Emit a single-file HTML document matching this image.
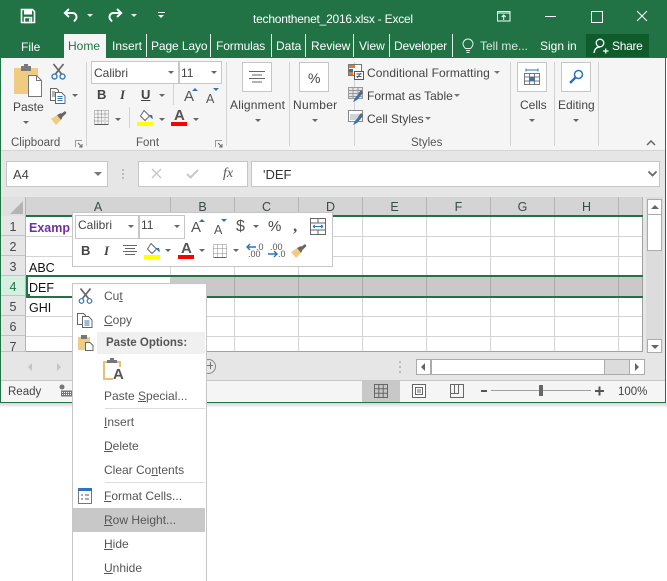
<!DOCTYPE html>
<html><head><meta charset="utf-8">
<style>
html,body{margin:0;padding:0;background:#fff;width:667px;height:581px;overflow:hidden}
body{position:relative;font-family:"Liberation Sans",sans-serif;font-size:12px;color:#444}
div,span.a,svg{position:absolute}
.t{position:absolute;white-space:nowrap;line-height:16px;font-size:12px;color:#444}
.w{color:#fff}
.b{background:#fff;border:1px solid #c6c6c6;box-sizing:border-box}
.v{background:#d4d4d4;width:1px}
.h{background:#d4d4d4;height:1px}
.sep{background:#d2d2d2;width:1px;top:62px;height:84px}
.tsep{background:#e6f0ea;width:1px;top:34px;height:23px}
.ar{position:absolute;width:0;height:0;border-left:3px solid transparent;border-right:3px solid transparent;border-top:3px solid #666}
.col{position:absolute;top:197px;height:18px;line-height:21px;text-align:center;font-size:12.5px;color:#3a4a44;background:#d4d4d4;border-right:1px solid #b4b4b4;box-sizing:border-box}
.row{position:absolute;left:1px;width:25px;height:20px;line-height:23px;text-align:center;font-size:12.5px;color:#444;background:#e6e6e6;border-bottom:1px solid #c4c4c4;box-sizing:border-box;border-right:1px solid #b4b4b4}
.c{position:absolute;left:29px;font-size:12.5px;color:#111;line-height:16px;white-space:nowrap}
u{text-decoration:underline}
.m{position:absolute;left:104px;font-size:12px;color:#555;line-height:16px;white-space:nowrap}
</style></head><body>

<!-- window -->
<div style="left:0;top:403px;width:667px;height:5px;background:linear-gradient(#d4d4d4,#fff)"></div>
<div style="left:0;top:0;width:666px;height:403px;background:#e6e6e6;border:solid #217346;border-width:0 1px 1px 1px;box-sizing:border-box"></div>

<!-- title -->
<div style="left:0;top:0;width:667px;height:58px;background:#217346"></div>
<svg style="left:20px;top:8px" width="16" height="16" viewBox="0 0 16 16"><path d="M1.5 1.5h11l2 2v11h-13z" fill="none" stroke="#fff" stroke-width="1.6"/><rect x="4" y="1.5" width="8" height="5" fill="#fff"/><rect x="4.5" y="9.5" width="7" height="5" fill="none" stroke="#fff" stroke-width="1.4"/><rect x="9" y="10.5" width="1.5" height="3" fill="#fff"/></svg>
<svg style="left:63px;top:8px" width="16" height="15" viewBox="0 0 16 15"><path d="M6 1 1.800 5 6 9M2 5h7.500a4 4 0 0 1 3.500 6L11 13.500" fill="none" stroke="#fff" stroke-width="1.900"/></svg>
<div class="ar" style="left:87px;top:14px;border-top-color:#e6f0ea"></div>
<svg style="left:107px;top:8px" width="16" height="15" viewBox="0 0 16 15"><path d="M10 1l4.200 4L10 9M14 5H6.500a4 4 0 0 0-3.500 6L5 13.500" fill="none" stroke="#fff" stroke-width="1.900"/></svg>
<div class="ar" style="left:131px;top:14px;border-top-color:#e6f0ea"></div>
<div style="left:158px;top:12px;width:7px;height:1px;background:#fff"></div>
<div class="ar" style="left:158px;top:15px;border-top-color:#fff"></div>
<div class="t w" style="left:253px;top:11px;letter-spacing:-.23px">techonthenet_2016.xlsx - Excel</div>
<svg style="left:497px;top:10px" width="16" height="14" viewBox="0 0 16 14"><path d="M.5 1.500h12.500v9.500H.5zM.5 3h12.500M6.700 10V5M4.700 7l2-2 2 2" fill="none" stroke="#fff"/></svg>
<div style="left:545px;top:16px;width:11px;height:1px;background:#fff"></div>
<div style="left:591px;top:11px;width:10px;height:10px;border:1px solid #fff"></div>
<svg style="left:636px;top:10px" width="12" height="12" viewBox="0 0 12 12"><path d="M1 1l10 10M11 1 1 11" stroke="#fff" fill="none"/></svg>

<!-- tabs -->
<div style="left:64px;top:34px;width:42px;height:25px;background:#f5f5f5"></div>
<div class="t w" style="left:21px;top:39px">File</div>
<div class="t" style="left:68px;top:38px;color:#217346">Home</div>
<div class="t w" style="left:112px;top:38px">Insert</div>
<div class="tsep" style="left:146px"></div>
<div class="t w" style="left:151px;top:38px;letter-spacing:-.1px">Page Layo</div>
<div class="tsep" style="left:210px"></div>
<div class="t w" style="left:216px;top:38px;letter-spacing:-.1px">Formulas</div>
<div class="tsep" style="left:271px"></div>
<div class="t w" style="left:276px;top:38px">Data</div>
<div class="tsep" style="left:305px"></div>
<div class="t w" style="left:311px;top:38px">Review</div>
<div class="tsep" style="left:353px"></div>
<div class="t w" style="left:359px;top:38px">View</div>
<div class="tsep" style="left:389px"></div>
<div class="t w" style="left:394px;top:38px;letter-spacing:-.2px">Developer</div>
<div class="tsep" style="left:452px"></div>
<svg style="left:462px;top:38px" width="12" height="16" viewBox="0 0 12 16"><path d="M3.500 10.500C2 9 1 7.800 1 6a5 5 0 0 1 10 0c0 1.800-1 3-2.500 4.500zM4 12.500h4M4.500 14.500h3" fill="none" stroke="#e6f0ea"/></svg>
<div class="t" style="left:480px;top:38px;color:#d6e6dc">Tell me...</div>
<div class="t w" style="left:540px;top:38px">Sign in</div>
<div style="left:586px;top:34px;width:63px;height:23px;background:#0f5b2c"></div>
<svg style="left:593px;top:38px" width="16" height="16" viewBox="0 0 16 16"><circle cx="7" cy="5" r="3.800" fill="none" stroke="#fff" stroke-width="1.300"/><path d="M1 15c.5-3.500 2.500-6 6-6M10 13h5.500M12.700 10.500v5" fill="none" stroke="#fff" stroke-width="1.300"/></svg>
<div class="t w" style="left:612px;top:38px;letter-spacing:-.3px">Share</div>

<!-- ribbon -->
<div style="left:1px;top:58px;width:664px;height:92px;background:#f5f5f5;border-bottom:1px solid #d4d4d4"></div>
<div class="sep" style="left:86px"></div><div class="sep" style="left:226px"></div><div class="sep" style="left:289px"></div><div class="sep" style="left:354px"></div><div class="sep" style="left:510px"></div><div class="sep" style="left:554px"></div><div class="sep" style="left:598px"></div>

<!-- clipboard -->
<svg style="left:13px;top:64px" width="30" height="34" viewBox="0 0 30 34"><rect x="1" y="4" width="24" height="26" fill="#f0cb82"/><rect x="8" y="2" width="10" height="5" fill="#7a7a7a"/><rect x="11" y="0" width="4" height="3" fill="#7a7a7a"/><path d="M15.500 11.500h8l5 5v16h-13z" fill="#fff" stroke="#777"/><path d="M23.500 11.500v5h5" fill="none" stroke="#777"/></svg>
<div class="t" style="left:13px;top:99px">Paste</div>
<div class="ar" style="left:23px;top:121px"></div>
<svg style="left:51px;top:63px" width="15" height="17" viewBox="0 0 15 17"><path d="M2.500 1l8 10M12.500 1l-8 10" stroke="#666" stroke-width="1.700" fill="none"/><circle cx="3.500" cy="13.500" r="2.500" fill="none" stroke="#2f74b5" stroke-width="1.300"/><circle cx="11.500" cy="13.500" r="2.500" fill="none" stroke="#2f74b5" stroke-width="1.300"/></svg>
<svg style="left:50px;top:88px" width="16" height="16" viewBox="0 0 16 16"><path d="M.5.500h6l2 2v10H.5z" fill="#fff" stroke="#666"/><path d="M5.500 4.500h6l3.500 3.500v7.500H5.500z" fill="#fff" stroke="#666"/><path d="M7.500 8.500h5M7.500 10.500h5M7.500 12.500h5" stroke="#2f74b5"/><path d="M2 4h3M2 6h3M2 8h3" stroke="#666"/></svg>
<div class="ar" style="left:72px;top:94px"></div>
<svg style="left:50px;top:110px" width="17" height="16" viewBox="0 0 17 16"><path d="M1 9l6-4 4 5-5 5z" fill="#f0cb82"/><path d="M7 5l4-2 2 3-2 4z" fill="#666"/><path d="M11 4l4-3 1.500 2-3.500 3.500z" fill="#666"/></svg>
<div class="t" style="left:11px;top:135px;font-size:11.500px;color:#555">Clipboard</div>
<svg style="left:75px;top:140px" width="8" height="8" viewBox="0 0 8 8"><path d="M.5 7V.5H7" fill="none" stroke="#999"/><path d="M3 3l4 4M7 4v3H4" fill="none" stroke="#666"/></svg>

<!-- font -->
<div class="b" style="left:91px;top:61px;width:88px;height:23px"></div>
<div class="t" style="left:94px;top:65px">Calibri</div>
<div class="ar" style="left:168px;top:71px"></div>
<div class="b" style="left:179px;top:61px;width:43px;height:23px"></div>
<div class="t" style="left:181px;top:65px">11</div>
<div class="ar" style="left:211px;top:71px"></div>
<div class="t" style="left:97px;top:87px;font-weight:bold;font-size:13px">B</div>
<div class="t" style="left:120px;top:87px;font-style:italic;font-size:13px;font-family:'Liberation Serif',serif;font-weight:bold">I</div>
<div class="t" style="left:141px;top:87px;font-weight:bold;font-size:13px"><u>U</u></div>
<div class="ar" style="left:159px;top:94px"></div>
<div style="left:173px;top:84px;width:1px;height:21px;background:#d2d2d2"></div>
<div class="t" style="left:184px;top:89px;font-size:15px;color:#555">A</div>
<div style="left:192px;top:88px;border:3px solid transparent;border-top:0;border-bottom:3px solid #2f74b5"></div>
<div class="t" style="left:206px;top:91px;font-size:12.500px;color:#555">A</div>
<div style="left:213px;top:88px;border:3px solid transparent;border-bottom:0;border-top:3px solid #2f74b5"></div>
<svg style="left:94px;top:110px" width="15" height="15" viewBox="0 0 15 15"><path d="M.5.500h14v14H.5zM.5 7.500h14M7.500.500v14M.5 4h14M.5 11h14M4 .500v14M11 .500v14" fill="none" stroke="#888" stroke-dasharray="1 1"/><path d="M.5 14.500h14" stroke="#555"/></svg>
<div class="ar" style="left:115px;top:118px"></div>
<div style="left:129px;top:107px;width:1px;height:21px;background:#d2d2d2"></div>
<svg style="left:139px;top:110px" width="15" height="12" viewBox="0 0 15 12"><path d="M5 .500l5.500 5.500-4.500 4.500L1.500 6z" fill="#fff" stroke="#666"/><path d="M10 5h3l1 4-2-1z" fill="#2f74b5"/></svg>
<div style="left:137px;top:122px;width:16px;height:4px;background:#ff0"></div>
<div class="ar" style="left:159px;top:118px"></div>
<div class="t" style="left:174px;top:108px;font-size:15px;font-weight:bold;color:#555">A</div>
<div style="left:171px;top:122px;width:16px;height:4px;background:#f00"></div>
<div class="ar" style="left:193px;top:118px"></div>
<div class="t" style="left:136px;top:135px;font-size:11.500px;color:#555">Font</div>
<svg style="left:215px;top:140px" width="8" height="8" viewBox="0 0 8 8"><path d="M.5 7V.5H7" fill="none" stroke="#999"/><path d="M3 3l4 4M7 4v3H4" fill="none" stroke="#666"/></svg>

<!-- alignment/number -->
<div class="b" style="left:242px;top:62px;width:30px;height:30px"></div>
<svg style="left:249px;top:71px" width="16" height="12" viewBox="0 0 16 12"><path d="M0 .500h16M3 4h10M0 7.500h16M3 11h10" stroke="#666"/></svg>
<div class="t" style="left:230px;top:97px;letter-spacing:.2px">Alignment</div>
<div class="ar" style="left:255px;top:119px"></div>
<div class="b" style="left:299px;top:62px;width:30px;height:30px"></div>
<div class="t" style="left:308px;top:70px;font-size:14px">%</div>
<div class="t" style="left:293px;top:97px;letter-spacing:.3px">Number</div>
<div class="ar" style="left:312px;top:119px"></div>

<!-- styles -->
<svg style="left:348px;top:64px" width="16" height="16" viewBox="0 0 16 16"><rect x=".5" y=".5" width="13" height="11" fill="#fff" stroke="#777"/><rect x="1" y="1" width="6" height="3" fill="#e07b2a"/><rect x="1" y="5" width="4" height="3" fill="#2f74b5"/><rect x="1" y="8" width="4" height="3" fill="#e07b2a"/><rect x="6.500" y="7.500" width="9" height="8" fill="#fff" stroke="#555"/><path d="M8.500 10h5M8.500 12.500h5M9 14l4-5" stroke="#555" fill="none"/></svg>
<div class="t" style="left:367px;top:65px;letter-spacing:.1px">Conditional Formatting</div>
<div class="ar" style="left:494px;top:71px;border-top-color:#777"></div>
<svg style="left:348px;top:87px" width="16" height="16" viewBox="0 0 16 16"><path d="M.5.500h14v11H.5zM.5 3.500h14M.5 6.500h14M.5 9.500h14M5 .500v11M10 .500v11" fill="#e4e4ea" stroke="#999"/><path d="M5 15l2-4 6-7 2 2-6 7z" fill="#2f74b5"/><path d="M10 7l3-4 2 2-3 4z" fill="#666"/></svg>
<div class="t" style="left:367px;top:88px">Format as Table</div>
<div class="ar" style="left:454px;top:94px;border-top-color:#777"></div>
<svg style="left:348px;top:110px" width="16" height="16" viewBox="0 0 16 16"><rect x=".5" y=".5" width="14" height="11" fill="#fff" stroke="#888"/><rect x="2" y="4" width="11" height="6" fill="#ccd4de"/><path d="M5 15l2-4 6-7 2 2-6 7z" fill="#2f74b5"/><path d="M10 7l3-4 2 2-3 4z" fill="#666"/></svg>
<div class="t" style="left:367px;top:111px">Cell Styles</div>
<div class="ar" style="left:425px;top:117px;border-top-color:#777"></div>
<div class="t" style="left:411px;top:135px;font-size:11.500px;color:#555">Styles</div>

<!-- cells/editing -->
<div class="b" style="left:517px;top:62px;width:30px;height:30px"></div>
<svg style="left:524px;top:68px" width="16" height="18" viewBox="0 0 16 18"><path d="M2 2h12M2 .500v3M14 .500v3" stroke="#2f74b5" fill="none"/><path d="M.5 5.500h15v11H.5zM.5 9h15M.5 13h15M5.500 5.500v11M10.500 5.500v11" fill="none" stroke="#777"/><rect x="5.500" y="9" width="5" height="4" fill="#2f74b5"/></svg>
<div class="t" style="left:520px;top:97px">Cells</div>
<div class="ar" style="left:529px;top:119px"></div>
<div class="b" style="left:561px;top:62px;width:30px;height:30px"></div>
<svg style="left:569px;top:69px" width="15" height="15" viewBox="0 0 15 15"><circle cx="9.500" cy="5.500" r="4" fill="none" stroke="#2f74b5" stroke-width="1.500"/><path d="M6.500 8.500 1 14" stroke="#2f74b5" stroke-width="2.500"/></svg>
<div class="t" style="left:558px;top:97px">Editing</div>
<div class="ar" style="left:573px;top:119px"></div>
<svg style="left:646px;top:140px" width="10" height="6" viewBox="0 0 10 6"><path d="M1 5l4-4 4 4" fill="none" stroke="#666" stroke-width="1.500"/></svg>

<!-- formula bar -->
<div class="b" style="left:6px;top:161px;width:102px;height:26px"></div>
<div class="t" style="left:13px;top:167px;font-size:13px">A4</div>
<div class="ar" style="left:94px;top:172px;border-left-width:4px;border-right-width:4px;border-top-width:4px;border-top-color:#777"></div>
<div style="left:122px;top:169px;width:2px;height:10px;background-image:linear-gradient(#bbb 50%,transparent 50%);background-size:2px 4px"></div>
<div class="b" style="left:138px;top:161px;width:110px;height:26px"></div>
<svg style="left:151px;top:168px" width="11" height="11" viewBox="0 0 11 11"><path d="M1 1l9 9M10 1l-9 9" stroke="#c8c8c8" stroke-width="1.500"/></svg>
<svg style="left:186px;top:168px" width="13" height="11" viewBox="0 0 13 11"><path d="M1 6l3.500 3.500L12 2" stroke="#c8c8c8" stroke-width="2" fill="none"/></svg>
<div class="t" style="left:223px;top:166px;font-family:'Liberation Serif',serif;font-style:italic;font-size:14px;color:#555">fx</div>
<div class="b" style="left:251px;top:161px;width:409px;height:26px"></div>
<div class="t" style="left:263px;top:167px;font-size:13px;color:#333">'DEF</div>
<svg style="left:648px;top:171px" width="9" height="6" viewBox="0 0 9 6"><path d="M.5.500l4 4 4-4" fill="none" stroke="#666" stroke-width="1.700"/></svg>

<!-- grid -->
<div style="left:26px;top:216px;width:617px;height:136px;background:#fff"></div>
<div style="left:1px;top:197px;width:25px;height:19px;background:#e0e0e0;border-right:1px solid #b4b4b4;box-sizing:border-box"></div>
<div style="left:10px;top:201px;width:0;height:0;border-left:13px solid transparent;border-bottom:13px solid #b4b4b4"></div>
<div class="col" style="left:26px;width:145px">A</div>
<div class="col" style="left:171px;width:64px">B</div>
<div class="col" style="left:235px;width:64px">C</div>
<div class="col" style="left:299px;width:64px">D</div>
<div class="col" style="left:363px;width:64px">E</div>
<div class="col" style="left:427px;width:64px">F</div>
<div class="col" style="left:491px;width:64px">G</div>
<div class="col" style="left:555px;width:64px">H</div>
<div class="col" style="left:619px;width:24px"></div>

<div class="row" style="top:216px">1</div>
<div class="row" style="top:236px">2</div>
<div class="row" style="top:256px">3</div>
<div class="row" style="top:276px;background:#d3f0e0;color:#217346">4</div>
<div class="row" style="top:296px">5</div>
<div class="row" style="top:316px">6</div>
<div class="row" style="top:336px;height:16px">7</div>

<div class="h" style="left:26px;top:236px;width:617px"></div>
<div class="h" style="left:26px;top:256px;width:617px"></div>
<div class="h" style="left:26px;top:316px;width:617px"></div>
<div class="h" style="left:26px;top:336px;width:617px"></div>
<div class="v" style="left:170px;top:216px;height:136px"></div>
<div class="v" style="left:234px;top:216px;height:136px"></div>
<div class="v" style="left:298px;top:216px;height:136px"></div>
<div class="v" style="left:362px;top:216px;height:136px"></div>
<div class="v" style="left:426px;top:216px;height:136px"></div>
<div class="v" style="left:490px;top:216px;height:136px"></div>
<div class="v" style="left:554px;top:216px;height:136px"></div>
<div class="v" style="left:618px;top:216px;height:136px"></div>
<div style="left:642px;top:216px;width:1px;height:136px;background:#a0a0a0"></div>
<div style="left:26px;top:351px;width:617px;height:1px;background:#a0a0a0"></div>

<!-- row-4 selection -->
<div style="left:170px;top:277px;width:472px;height:19px;background:#c9c9c9"></div>
<div class="v" style="left:234px;top:277px;height:19px;background:#a8a8a8"></div>
<div class="v" style="left:298px;top:277px;height:19px;background:#a8a8a8"></div>
<div class="v" style="left:362px;top:277px;height:19px;background:#a8a8a8"></div>
<div class="v" style="left:426px;top:277px;height:19px;background:#a8a8a8"></div>
<div class="v" style="left:490px;top:277px;height:19px;background:#a8a8a8"></div>
<div class="v" style="left:554px;top:277px;height:19px;background:#a8a8a8"></div>
<div class="v" style="left:618px;top:277px;height:19px;background:#a8a8a8"></div>
<div style="left:26px;top:215px;width:617px;height:2px;background:#217346"></div>
<div style="left:26px;top:275px;width:617px;height:2px;background:#217346"></div>
<div style="left:26px;top:296px;width:617px;height:2px;background:#217346"></div>
<div style="left:26px;top:275px;width:2px;height:23px;background:#217346"></div>
<div style="left:26px;top:294px;width:4px;height:4px;background:#217346"></div>

<div class="c" style="top:220px;font-weight:bold;color:#7030a0">Examp</div>
<div class="c" style="top:260px">ABC</div>
<div class="c" style="top:280px">DEF</div>
<div class="c" style="top:300px">GHI</div>

<!-- v scrollbar -->
<div style="left:646px;top:197px;width:17px;height:156px;background:#dcdcdc"></div>
<div class="b" style="left:647px;top:199px;width:15px;height:16px;border-color:#ababab"></div>
<div style="left:651px;top:205px;border:4px solid transparent;border-top:0;border-bottom:4px solid #666"></div>
<div class="b" style="left:647px;top:214px;width:15px;height:37px;border-color:#ababab"></div>
<div class="b" style="left:647px;top:339px;width:15px;height:14px;border-color:#ababab"></div>
<div style="left:651px;top:345px;border:4px solid transparent;border-bottom:0;border-top:4px solid #666"></div>

<!-- tabs row -->
<div style="left:28px;top:363px;border:4px solid transparent;border-left:0;border-right:4px solid #c4c4c4"></div>
<div style="left:57px;top:363px;border:4px solid transparent;border-right:0;border-left:4px solid #c4c4c4"></div>
<div style="left:201px;top:359px;width:13px;height:13px;border:1px solid #888;border-radius:50%"></div>
<div style="left:207px;top:365px;width:6px;height:1px;background:#777"></div>
<div style="left:210px;top:362px;width:1px;height:7px;background:#777"></div>
<div style="left:399px;top:361px;width:2px;height:2px;background:#bbb;box-shadow:0 5px #bbb,0 10px #bbb"></div>
<div class="b" style="left:416px;top:359px;width:229px;height:16px;background:#dcdcdc;border-color:#ababab"></div>
<div class="b" style="left:416px;top:359px;width:15px;height:16px;border-color:#ababab"></div>
<div style="left:421px;top:363px;border:4px solid transparent;border-left:0;border-right:4px solid #666"></div>
<div class="b" style="left:431px;top:359px;width:174px;height:16px;border-color:#ababab"></div>
<div class="b" style="left:629px;top:359px;width:16px;height:16px;border-color:#ababab"></div>
<div style="left:635px;top:363px;border:4px solid transparent;border-right:0;border-left:4px solid #666"></div>

<!-- status -->
<div style="left:1px;top:380px;width:664px;height:22px;background:#f5f5f5;border-top:1px solid #c8c8c8;box-sizing:border-box"></div>
<div class="t" style="left:8px;top:384px;font-size:11.500px">Ready</div>
<svg style="left:59px;top:384px" width="14" height="13" viewBox="0 0 14 13"><circle cx="3" cy="3" r="2.500" fill="#777"/><path d="M2 6.500h11v6H2z" fill="#777"/><path d="M3 8.500h9M3 10.500h9" stroke="#fff" stroke-dasharray="1 1"/></svg>
<div style="left:362px;top:381px;width:38px;height:21px;background:#c8c8c8"></div>
<svg style="left:374px;top:384px" width="14" height="14" viewBox="0 0 14 14"><path d="M.5.500h13v13H.5zM.5 4.800h13M.5 9.200h13M4.800.500v13M9.200.500v13" fill="none" stroke="#666"/></svg>
<svg style="left:412px;top:384px" width="14" height="14" viewBox="0 0 14 14"><path d="M.5.500h13v13H.5z" fill="#fff" stroke="#666"/><path d="M3.500 3.500h7v7h-7zM5 6h4M5 8h4" fill="none" stroke="#666"/></svg>
<svg style="left:450px;top:384px" width="14" height="14" viewBox="0 0 14 14"><path d="M.5.500h13v13H.5zM.5 9.500h8V.500M4.500.500v9" fill="none" stroke="#666"/></svg>
<div style="left:481px;top:390px;width:6px;height:2px;background:#555"></div>
<div style="left:491px;top:390px;width:100px;height:1px;background:#a0a0a0"></div>
<div style="left:539px;top:385px;width:4px;height:11px;background:#666"></div>
<svg style="left:595px;top:386px" width="10" height="10" viewBox="0 0 10 10"><path d="M0 5h9M4.500.500v9" stroke="#555" stroke-width="2"/></svg>
<div class="t" style="left:618px;top:384px;font-size:11.500px">100%</div>

<!-- mini toolbar -->
<div class="b" style="left:72px;top:212px;width:261px;height:55px"></div>
<div class="b" style="left:75px;top:215px;width:64px;height:24px"></div>
<div class="t" style="left:78px;top:217px">Calibri</div>
<div class="ar" style="left:128px;top:225px"></div>
<div class="b" style="left:139px;top:215px;width:46px;height:24px"></div>
<div class="t" style="left:141px;top:217px">11</div>
<div class="ar" style="left:174px;top:225px"></div>
<div class="t" style="left:191px;top:220px;font-size:15px;color:#555">A</div>
<div style="left:199px;top:219px;border:3px solid transparent;border-top:0;border-bottom:3px solid #2f74b5"></div>
<div class="t" style="left:214px;top:222px;font-size:12.500px;color:#555">A</div>
<div style="left:221px;top:219px;border:3px solid transparent;border-bottom:0;border-top:3px solid #2f74b5"></div>
<div class="t" style="left:236px;top:219px;font-size:16px;color:#555">$</div>
<div class="ar" style="left:253px;top:225px"></div>
<div class="t" style="left:268px;top:219px;font-size:15px">%</div>
<div class="t" style="left:293px;top:218px;font-size:17px;font-weight:bold;font-family:'Liberation Serif',serif;color:#555">,</div>
<svg style="left:310px;top:218px" width="16" height="17" viewBox="0 0 16 17"><path d="M.5.500h15v16H.5zM.5 5h15M.5 12h15M8 .500V5M8 12v4.500" fill="none" stroke="#666"/><path d="M3 8.500h10M3 8.500l2-1.500M3 8.500l2 1.500M13 8.500l-2-1.500M13 8.500l-2 1.500" fill="none" stroke="#2f74b5"/></svg>
<div class="t" style="left:81px;top:243px;font-weight:bold;font-size:13px">B</div>
<div class="t" style="left:104px;top:243px;font-style:italic;font-size:13px;font-weight:bold;font-family:'Liberation Serif',serif">I</div>
<svg style="left:123px;top:245px" width="14" height="11" viewBox="0 0 14 11"><path d="M0 .500h14M2 3.500h10M0 6.500h14M2 9.500h10" stroke="#666"/></svg>
<svg style="left:146px;top:243px" width="15" height="12" viewBox="0 0 15 12"><path d="M5 .500l5.500 5.500-4.500 4.500L1.500 6z" fill="#fff" stroke="#666"/><path d="M10 5h3l1 4-2-1z" fill="#2f74b5"/></svg>
<div style="left:144px;top:255px;width:16px;height:4px;background:#ff0"></div>
<div class="ar" style="left:165px;top:249px"></div>
<div class="t" style="left:181px;top:241px;font-size:15px;font-weight:bold;color:#555">A</div>
<div style="left:178px;top:255px;width:16px;height:4px;background:#f00"></div>
<div class="ar" style="left:199px;top:249px"></div>
<svg style="left:213px;top:244px" width="14" height="14" viewBox="0 0 14 14"><path d="M.5.500h13v13H.5zM.5 4.500h13M.5 9.500h13M4.500.500v13M9.500.500v13" fill="none" stroke="#888" stroke-dasharray="1 1"/><path d="M.5 13.500h13" stroke="#666"/></svg>
<div class="ar" style="left:233px;top:249px"></div>
<svg style="left:246px;top:243px" width="10" height="8" viewBox="0 0 10 8"><path d="M1 4h9M4 1 1 4l3 3" fill="none" stroke="#2f74b5" stroke-width="1.400"/></svg>
<div class="t" style="left:256px;top:242px;font-size:9px;line-height:10px;color:#555">.0</div>
<div class="t" style="left:248px;top:249px;font-size:9px;line-height:10px;color:#555">.00</div>
<div class="t" style="left:270px;top:242px;font-size:9px;line-height:10px;color:#555">.00</div>
<svg style="left:268px;top:250px" width="10" height="8" viewBox="0 0 10 8"><path d="M0 4h9M6 1l3 3-3 3" fill="none" stroke="#2f74b5" stroke-width="1.400"/></svg>
<div class="t" style="left:278px;top:249px;font-size:9px;line-height:10px;color:#555">.0</div>
<svg style="left:290px;top:243px" width="17" height="16" viewBox="0 0 17 16"><path d="M1 9l6-4 4 5-5 5z" fill="#f0cb82"/><path d="M7 5l4-2 2 3-2 4z" fill="#666"/><path d="M11 4l4-3 1.500 2-3.500 3.500z" fill="#666"/></svg>

<!-- context menu -->
<div style="left:72px;top:283px;width:135px;height:298px;background:#fff;border:solid #c6c6c6;border-width:1px 1px 0 1px;box-sizing:border-box"></div>
<svg style="left:78px;top:288px" width="15" height="16" viewBox="0 0 15 16"><path d="M2.500.500l8 10M12.500.500l-8 10" stroke="#666" stroke-width="1.700" fill="none"/><circle cx="3.500" cy="13" r="2.300" fill="none" stroke="#2f74b5" stroke-width="1.200"/><circle cx="11.500" cy="13" r="2.300" fill="none" stroke="#2f74b5" stroke-width="1.200"/></svg>
<div class="m" style="top:288px">Cu<u>t</u></div>
<svg style="left:77px;top:313px" width="16" height="15" viewBox="0 0 16 15"><path d="M.5.500h6l2 2v9H.5z" fill="#fff" stroke="#666"/><path d="M5.500 3.500h6l3.500 3.500v7.500H5.500z" fill="#fff" stroke="#666"/><path d="M7.500 8h5M7.500 10h5M7.500 12h5" stroke="#2f74b5"/></svg>
<div class="m" style="top:312px"><u>C</u>opy</div>
<div style="left:97px;top:332px;width:108px;height:22px;background:#f0f0f0"></div>
<svg style="left:78px;top:335px" width="16" height="16" viewBox="0 0 16 16"><rect x="0" y="2" width="12" height="13" fill="#f0cb82"/><rect x="3" y="0" width="6" height="4" fill="#777"/><path d="M7.500 7.500h4.500l3 3v5h-7.500z" fill="#fff" stroke="#666"/></svg>
<div class="t" style="left:106px;top:335px;font-weight:bold;font-size:11.500px;color:#555">Paste Options:</div>
<svg style="left:103px;top:358px" width="23" height="23" viewBox="0 0 23 23"><path d="M0 3h18v6h-2V5H2v15h8v2H0z" fill="#e9bf74"/><rect x="4" y="2" width="10" height="3" fill="#777"/><rect x="7" y="0" width="4" height="2" fill="#777"/></svg>
<div class="t" style="left:113px;top:367px;font-size:15px;font-weight:bold;color:#555">A</div>
<div class="m" style="top:388px">Paste <u>S</u>pecial...</div>
<div style="left:105px;top:408px;width:100px;height:1px;background:#dcdcdc"></div>
<div class="m" style="top:414px"><u>I</u>nsert</div>
<div class="m" style="top:438px"><u>D</u>elete</div>
<div class="m" style="top:462px">Clear Co<u>n</u>tents</div>
<div style="left:105px;top:482px;width:100px;height:1px;background:#dcdcdc"></div>
<svg style="left:78px;top:488px" width="14" height="16" viewBox="0 0 14 16"><rect x=".5" y=".5" width="13" height="15" fill="#fff" stroke="#777"/><rect x="0" y="0" width="14" height="3" fill="#2f74b5"/><path d="M3 7h2M7 7h4M3 11h2M7 11h4" stroke="#555"/></svg>
<div class="m" style="top:488px"><u>F</u>ormat Cells...</div>
<div style="left:73px;top:508px;width:132px;height:24px;background:#c8c8c8"></div>
<div class="m" style="top:512px"><u>R</u>ow Height...</div>
<div class="m" style="top:536px"><u>H</u>ide</div>
<div class="m" style="top:560px"><u>U</u>nhide</div>

</body></html>
